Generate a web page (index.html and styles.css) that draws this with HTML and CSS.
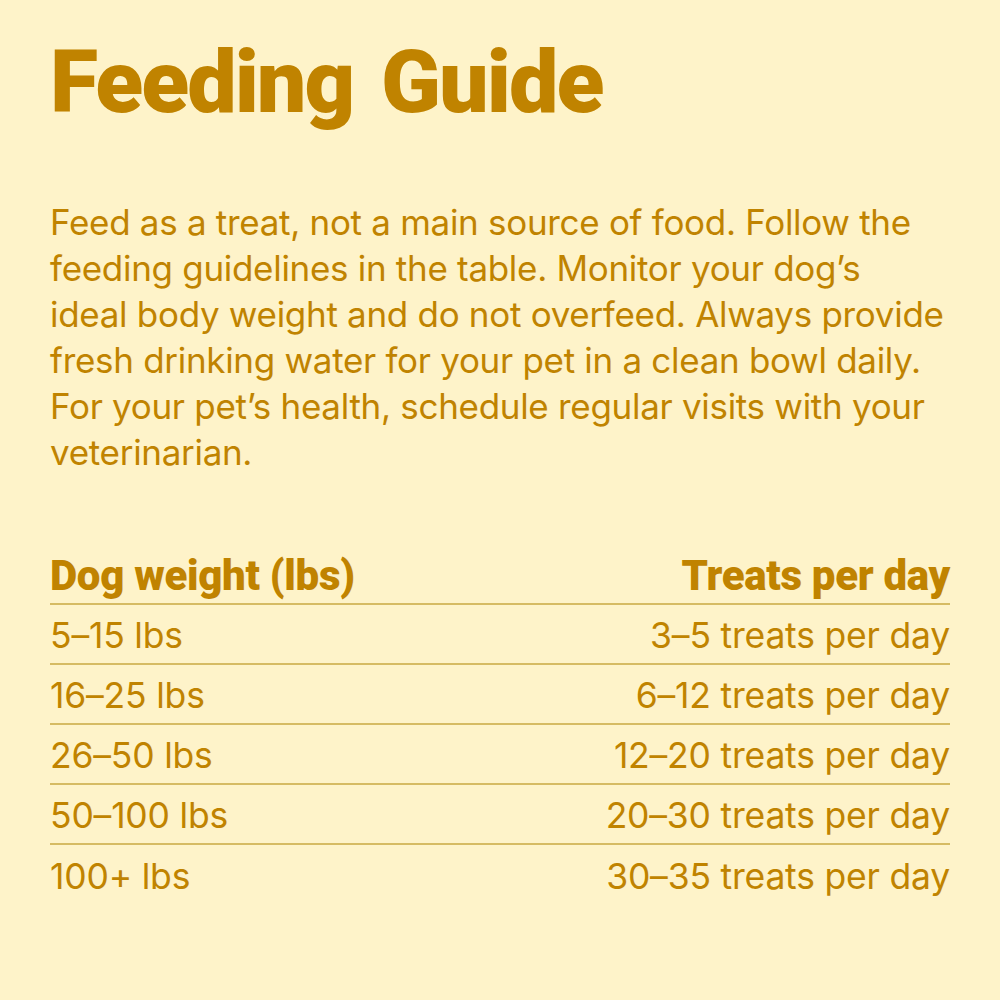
FILE: index.html
```html
<!DOCTYPE html>
<html>
<head>
<meta charset="utf-8">
<link rel="stylesheet" href="styles.css">
</head>
<body>
<main class="page">
  <h1 class="title">Feeding Guide</h1>
  <p class="intro">Feed as a treat, not a main source of food. Follow the<br>feeding guidelines in the table. Monitor your dog’s<br>ideal body weight and do not overfeed. Always provide<br>fresh drinking water for your pet in a clean bowl daily.<br>For your pet’s health, schedule regular visits with your<br>veterinarian.</p>
  <div class="table">
    <div class="row head"><span>Dog weight (lbs)</span><span>Treats per day</span></div>
    <div class="row"><span>5–15 lbs</span><span>3–5 treats per day</span></div>
    <div class="row"><span>16–25 lbs</span><span>6–12 treats per day</span></div>
    <div class="row"><span>26–50 lbs</span><span>12–20 treats per day</span></div>
    <div class="row"><span>50–100 lbs</span><span>20–30 treats per day</span></div>
    <div class="row"><span>100+ lbs</span><span>30–35 treats per day</span></div>
  </div>
</main>
</body>
</html>
```
FILE: styles.css
```css
html, body { margin: 0; padding: 0; }
body { background: #fef3c9; color: #c08300; font-family: Inter, "Noto Sans", sans-serif; }
.page { width: 1000px; height: 1000px; box-sizing: border-box; padding: 32px 50px 0 50px; }
.title { margin: 0; font-family: Roboto, sans-serif; font-weight: 900; font-size: 88px; line-height: 100px; word-spacing: 8px; letter-spacing: -2px; }
.intro { margin: 67px 0 0 0; font-size: 35px; line-height: 46px; font-weight: 400; letter-spacing: -0.3px; white-space: nowrap; }
.table { margin-top: 70px; }
.row { display: flex; justify-content: space-between; height: 60px; align-items: center; font-size: 35.5px; border-bottom: 2px solid #d6bb63; box-sizing: border-box; padding-top: 2px; letter-spacing: -0.2px; }
.row:last-child { border-bottom: none; }
.head { font-family: Roboto, sans-serif; font-weight: 900; font-size: 42px; letter-spacing: -0.3px; }
```
